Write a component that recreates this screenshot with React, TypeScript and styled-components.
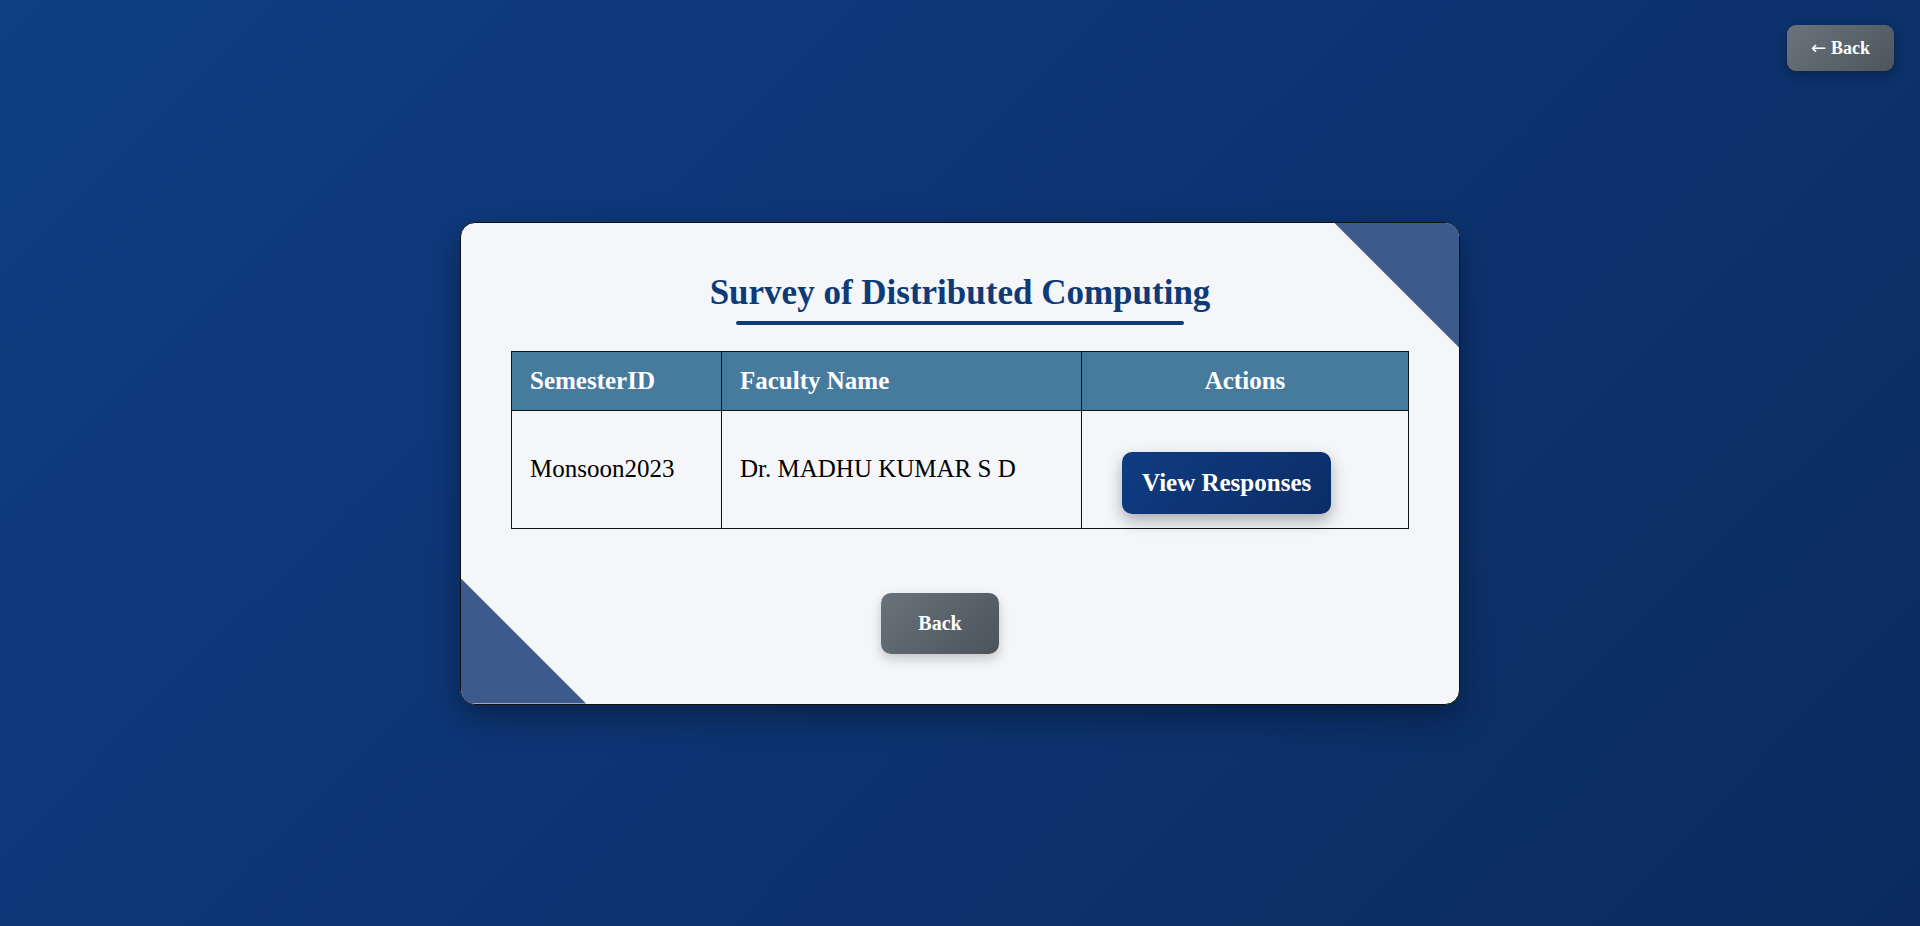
import type { FC } from "react";
import styled, { createGlobalStyle } from "styled-components";

interface SurveyRow {
  semesterId: string;
  facultyName: string;
}

const rows: SurveyRow[] = [
  { semesterId: "Monsoon2023", facultyName: "Dr. MADHU KUMAR S D" },
];

const GlobalStyle = createGlobalStyle`
  html, body {
    margin: 0;
    padding: 0;
  }

  body {
    font-family: "Liberation Serif", "Times New Roman", serif;
    background: linear-gradient(135deg, #0f3e83 0%, #0d3472 50%, #0b2b5f 100%);
    min-height: 100vh;
  }
`;

const Page = styled.main`
  position: relative;
  min-height: 100vh;
  display: flex;
  align-items: center;
  justify-content: center;
  box-sizing: border-box;
`;

const TopBackButton = styled.button`
  position: absolute;
  top: 25px;
  right: 26px;
  display: flex;
  align-items: center;
  gap: 5px;
  padding: 13px 24px;
  border: none;
  border-radius: 9px;
  background: linear-gradient(135deg, #6b737c, #4d555d);
  color: #ffffff;
  font-family: "Liberation Serif", "Times New Roman", serif;
  font-size: 18px;
  font-weight: 700;
  line-height: 20px;
  cursor: pointer;
  box-shadow: 0 4px 12px rgba(0, 0, 0, 0.3);
`;

const Arrow = styled.span`
  font-family: "DejaVu Sans", sans-serif;
  font-weight: 400;
  font-size: 18px;
`;

const Card = styled.section`
  position: relative;
  width: 1000px;
  box-sizing: border-box;
  padding: 50px;
  background: #f4f6fa;
  border: 1px solid #111;
  border-radius: 15px;
  overflow: hidden;
  box-shadow: 0 12px 32px rgba(0, 0, 0, 0.35);
  display: flex;
  flex-direction: column;
  align-items: center;

  &::before,
  &::after {
    content: "";
    position: absolute;
    width: 125px;
    height: 125px;
    background: #3c5a8b;
  }

  &::before {
    top: 0;
    right: 0;
    clip-path: polygon(0 0, 100% 0, 100% 100%);
  }

  &::after {
    bottom: 0;
    left: 0;
    clip-path: polygon(0 0, 100% 100%, 0 100%);
  }
`;

const Title = styled.h2`
  position: relative;
  margin: 0 0 26px;
  padding-bottom: 12px;
  color: #0f3a78;
  font-size: 35px;
  line-height: 40px;
  font-weight: 700;
  text-align: center;

  &::after {
    content: "";
    position: absolute;
    left: 50%;
    bottom: 0;
    transform: translateX(-50%);
    width: 448px;
    height: 4px;
    border-radius: 2px;
    background: #0f3a78;
  }
`;

const Table = styled.table`
  position: relative;
  z-index: 1;
  width: 897px;
  table-layout: fixed;
  border-collapse: collapse;
  font-size: 25px;
`;

const HeadCell = styled.th<{ $width: number; $center?: boolean }>`
  box-sizing: border-box;
  width: ${(p) => p.$width}px;
  padding: 16px 18px;
  background: #477b9e;
  color: #ffffff;
  border: 1px solid #111;
  font-weight: 700;
  line-height: 26px;
  text-align: ${(p) => (p.$center ? "center" : "left")};
`;

const Cell = styled.td`
  padding: 16px 18px;
  border: 1px solid #111;
  color: #000;
  line-height: 26px;
  vertical-align: middle;
  white-space: nowrap;
`;

const ActionCell = styled.td`
  padding: 41px 18px 14px 40px;
  border: 1px solid #111;
  vertical-align: middle;
`;

const ViewButton = styled.button`
  display: block;
  padding: 17px 20px;
  border: none;
  border-radius: 10px;
  background: linear-gradient(135deg, #0f3c82, #0c2d66);
  color: #ffffff;
  font-family: "Liberation Serif", "Times New Roman", serif;
  font-size: 25px;
  font-weight: 700;
  line-height: 28px;
  white-space: nowrap;
  cursor: pointer;
  box-shadow: 0 7px 16px rgba(0, 0, 0, 0.3);
`;

const BackButton = styled.button`
  position: relative;
  z-index: 1;
  margin: 64px 40px 0 0;
  padding: 19px 37px;
  border: none;
  border-radius: 10px;
  background: linear-gradient(135deg, #6a727b, #4b535b);
  color: #ffffff;
  font-family: "Liberation Serif", "Times New Roman", serif;
  font-size: 20px;
  font-weight: 700;
  line-height: 23px;
  cursor: pointer;
  box-shadow: 0 5px 12px rgba(0, 0, 0, 0.2);
`;

const App: FC = () => {
  return (
    <>
      <GlobalStyle />
      <Page>
        <TopBackButton>
          <Arrow>←</Arrow>
          Back
        </TopBackButton>

        <Card>
          <Title>Survey of Distributed Computing</Title>

          <Table>
            <thead>
              <tr>
                <HeadCell $width={210}>SemesterID</HeadCell>
                <HeadCell $width={360}>Faculty Name</HeadCell>
                <HeadCell $width={327} $center>
                  Actions
                </HeadCell>
              </tr>
            </thead>
            <tbody>
              {rows.map((row) => (
                <tr key={row.semesterId}>
                  <Cell>{row.semesterId}</Cell>
                  <Cell>{row.facultyName}</Cell>
                  <ActionCell>
                    <ViewButton>View Responses</ViewButton>
                  </ActionCell>
                </tr>
              ))}
            </tbody>
          </Table>

          <BackButton>Back</BackButton>
        </Card>
      </Page>
    </>
  );
};

export default App;
